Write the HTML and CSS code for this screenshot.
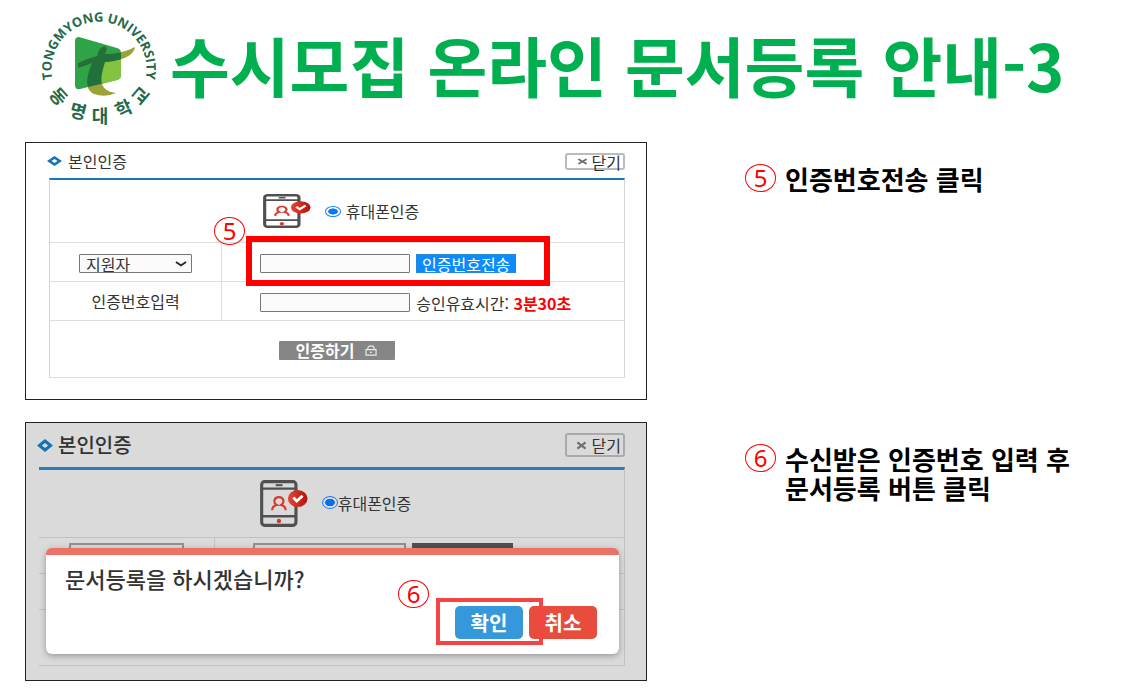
FILE: index.html
```html
<!DOCTYPE html>
<html lang="ko">
<head>
<meta charset="utf-8">
<meta name="viewport" content="width=device-width, initial-scale=1">
<title>수시모집 온라인 문서등록 안내-3</title>
<link rel="stylesheet" href="styles.css">
</head>
<body>
<svg width="0" height="0" class="defs" aria-hidden="true">
  <defs>
    <linearGradient id="badge" x1="0" x2="1"><stop offset="0" stop-color="#e5462f"/><stop offset="1" stop-color="#b5120f"/></linearGradient>
    <symbol id="phone" viewBox="0 0 49 47" preserveAspectRatio="none">
      <rect x="1.7" y="1.7" width="35" height="43.6" rx="3" fill="none" stroke="#505050" stroke-width="3.2"/>
      <path d="M2 8.6H37M2 36.2H37" stroke="#505050" stroke-width="2.4"/>
      <path d="M16 5.2H23" stroke="#505050" stroke-width="2"/>
      <circle cx="19.3" cy="41" r="2.2" fill="#d8392c"/>
      <path d="M12.4 30.2C12.6 26.8 14.4 25.6 17 25C13.400 23 14 17.200 19.300 17.200S25.200 23 21.600 25C24.200 25.600 26 26.800 26.200 30.200" fill="none" stroke="#d8392c" stroke-width="2.200"/>
      <ellipse cx="38.500" cy="18.500" rx="10" ry="8.600" fill="url(#badge)"/>
      <path d="M34 17.500L37.500 21L43.500 15.800" fill="none" stroke="#fff" stroke-width="2.800"/>
    </symbol>
    <symbol id="diamond" viewBox="0 0 16 14" preserveAspectRatio="none">
      <path fill-rule="evenodd" d="M8 0L16 7L8 14L0 7ZM8 4.200L4.800 7L8 9.800L11.200 7Z" fill="#1273b5"/>
    </symbol>
    <symbol id="cross" viewBox="0 0 12 10" preserveAspectRatio="none">
      <path d="M1.500 1.500L10.500 8.500M10.500 1.500L1.500 8.500" stroke="#707070" stroke-width="2.400"/>
    </symbol>
  </defs>
</svg>

<header class="masthead">
  <svg class="logo" viewBox="38 3 122 130" role="img" aria-label="동명대학교 Tongmyong University">
    <defs>
      <path id="ring" d="M52.500 79A47.500 47.500 0 1 1 145.500 79"/>
      <clipPath id="plate"><path d="M79 37Q75 37 75 41V85Q75 90 80 89L117 80Q121 79 121 75V53Q121 49 117 48Z"/></clipPath>
    </defs>
    <text class="logo-ring"><textPath href="#ring">TONGMYONG UNIVERSITY</textPath></text>
    <g class="logo-school">
      <text transform="translate(58 97) rotate(48)" y="6">동</text>
      <text transform="translate(78 112) rotate(14)" y="6">명</text>
      <text transform="translate(100 117)" y="6">대</text>
      <text transform="translate(124 109) rotate(-25)" y="6">학</text>
      <text transform="translate(141 96) rotate(-50)" y="6">교</text>
    </g>
    <path d="M79 37Q75 37 75 41V85Q75 90 80 89L117 80Q121 79 121 75V53Q121 49 117 48Z" fill="#2fa348"/>
    <path d="M102 60L121 54V75Q121 79 117 80L94 86Q99 76 102 60Z" fill="#84c341"/>
    <path d="M78 63Q88 58 97 56Q99 46 105 46Q109 48 105 54Q122 54 135 47Q134 56 118 60Q110 62 105 62C101 76 96 90 116 93Q105 98 94 94C84 89 86 76 92 63Q86 66 78 68Z" fill="#9ba338"/>
    <path clip-path="url(#plate)" d="M78 63Q88 58 97 56Q99 46 105 46Q109 48 105 54Q122 54 135 47Q134 56 118 60Q110 62 105 62C101 76 96 90 116 93Q105 98 94 94C84 89 86 76 92 63Q86 66 78 68Z" fill="#22713b"/>
  </svg>
  <h1 class="title">수시모집 온라인 문서등록 안내-3</h1>
</header>

<main class="steps">
  <section class="panel panel-form" aria-label="본인인증">
    <div class="panel-head">
      <h2 class="panel-title"><svg class="diamond"><use href="#diamond"/></svg>본인인증</h2>
      <button type="button" class="close"><svg class="cross"><use href="#cross"/></svg>닫기</button>
    </div>
    <table class="form">
      <colgroup><col class="col-label"><col></colgroup>
      <tr class="row-method"><td colspan="2">
        <div class="method">
          <svg class="phone"><use href="#phone"/></svg>
          <label class="choice"><input type="radio" name="method1" checked>휴대폰인증</label>
        </div>
      </td></tr>
      <tr class="row-field">
        <th class="label-cell">
          <span class="picker">
            <select aria-label="인증 대상"><option>지원자</option></select>
            <svg viewBox="0 0 12 6"><path d="M1 1L6 4.500L11 1" fill="none" stroke="#222" stroke-width="1.800"/></svg>
          </span>
        </th>
        <td><div class="field marked">
          <input type="text" aria-label="휴대폰 번호">
          <button type="button" class="send">인증번호전송</button>
          <span class="num num-over">5</span>
        </div></td>
      </tr>
      <tr class="row-field">
        <th class="label-cell"><label for="code">인증번호입력</label></th>
        <td><div class="field"><input type="text" id="code"><span>승인유효시간: <strong class="time">3분30초</strong></span></div></td>
      </tr>
      <tr class="row-submit"><td colspan="2">
        <button type="button" class="submit">인증하기
          <svg viewBox="0 0 14 12"><path d="M3.500 5V4Q3.500 1 7 1T10.500 4V5M1.500 5H12.500V11H1.500ZM6 8H8" fill="none" stroke="#e8e8e8" stroke-width="1.300"/></svg>
        </button>
      </td></tr>
    </table>
  </section>

  <div class="guide"><span class="num">5</span><p>인증번호전송 클릭</p></div>

  <section class="panel panel-confirm" aria-label="문서등록 확인">
    <div class="panel-head">
      <h2 class="panel-title"><svg class="diamond"><use href="#diamond"/></svg>본인인증</h2>
      <button type="button" class="close"><svg class="cross"><use href="#cross"/></svg>닫기</button>
    </div>
    <table class="form">
      <colgroup><col class="col-label"><col></colgroup>
      <tr class="row-method"><td colspan="2">
        <div class="method">
          <svg class="phone"><use href="#phone"/></svg>
          <label class="choice"><input type="radio" name="method2" checked>휴대폰인증</label>
        </div>
      </td></tr>
      <tr class="row-field"><th class="label-cell"><span class="ghost ghost-select"></span></th>
        <td><div class="field"><span class="ghost ghost-input"></span><span class="ghost ghost-send"></span></div></td></tr>
      <tr class="row-field"><th class="label-cell"></th><td></td></tr>
      <tr class="row-submit"><td colspan="2"></td></tr>
    </table>
    <div class="dialog" role="dialog" aria-labelledby="ask">
      <p id="ask">문서등록을 하시겠습니까?</p>
      <div class="actions">
        <span class="ok-wrap"><button type="button" class="ok">확인</button><span class="num num-over">6</span></span>
        <button type="button" class="cancel">취소</button>
      </div>
    </div>
  </section>

  <div class="guide"><span class="num">6</span><p>수신받은 인증번호 입력 후<br>문서등록 버튼 클릭</p></div>
</main>
</body>
</html>
```
FILE: styles.css
```css
* { box-sizing: border-box; }

body {
  margin: 0;
  background: #fff;
  color: #333;
  font: 16px/18px "Noto Sans CJK KR", sans-serif;
}

h1, h2, p { margin: 0; }
button, input, select { font: inherit; color: inherit; margin: 0; }
svg { display: block; flex: none; }
.defs { position: absolute; }

/* Heading */
.masthead {
  display: flex;
  align-items: center;
  gap: 10px;
  padding: 3px 25px 9px 38px;
}
.logo { width: 122px; height: 130px; }
.logo-ring { font: 700 13px "Open Sans", sans-serif; fill: #22694a; }
.logo-school { font: 700 18px "Noto Sans CJK KR", sans-serif; fill: #22694a; text-anchor: middle; }
.title { padding-bottom: 8px; font-size: 65px; line-height: 80px; font-weight: 700; color: #00b050; white-space: nowrap; }

/* Screens on the left, instructions on the right */
.steps {
  display: grid;
  grid-template-columns: 622fr 363fr;
  column-gap: 98px;
  row-gap: 22px;
  padding: 0 25px 9px;
}
.guide {
  display: flex;
  align-items: flex-start;
  gap: 9px;
  padding-top: 22px;
  color: #000;
  font-size: 26px;
  line-height: 29px;
  font-weight: 700;
  white-space: nowrap;
}
.num {
  display: block;
  flex: none;
  width: 31px;
  height: 28px;
  border: 1px solid #f00;
  border-radius: 50%;
  color: #f00;
  font: 400 24px/26px "Noto Sans", sans-serif;
  text-align: center;
}
.num-over { position: absolute; }

/* Shared panel parts */
.panel { position: relative; border: 1px solid #222; }
.panel-head { display: flex; align-items: center; justify-content: space-between; }
.panel-title { display: flex; align-items: center; font-size: 16px; font-weight: 400; }
.close {
  display: flex;
  align-items: center;
  justify-content: flex-end;
  width: 60px;
  padding: 0 2px 0 0;
  border: 2px solid #bbb;
  border-radius: 3px;
  background: #fff;
}
.form { width: 100%; table-layout: fixed; border-collapse: separate; border-spacing: 0; }
.form td, .form th { padding: 0; font-weight: 400; border-bottom: 1px solid #ddd; }
.col-label { width: 30%; }
.label-cell { border-right: 1px solid #ddd; text-align: center; }
.method, .choice { display: flex; align-items: center; justify-content: center; }
.method { padding-left: 8px; gap: 14px; }
.choice input {
  appearance: none;
  width: 16px;
  border: 1px solid #1a7dff;
  border-radius: 50%;
  background: radial-gradient(closest-side, #0a76ff 64%, #fff 72%);
}
.field { display: flex; align-items: center; width: fit-content; white-space: nowrap; }

/* First screen */
.panel-form { padding: 0 21px 21px 23px; }
.panel-form .panel-head { height: 35px; margin-left: -2px; padding-top: 2px; }
.panel-form .panel-title { gap: 6px; padding-bottom: 2px; }
.panel-form .diamond { width: 15px; height: 10px; }
.panel-form .close { height: 17px; line-height: 12px; gap: 4px; }
.panel-form .cross { width: 11px; height: 7px; }
.panel-form .form { border: 1px solid #d5d5d5; border-top: 2px solid #1a78b8; border-bottom: 0; }
.panel-form .row-method { height: 63px; }
.panel-form .row-field { height: 39px; }
.panel-form .row-submit { height: 57px; }
.panel-form .phone { width: 48px; height: 34px; }
.panel-form .choice { gap: 5px; }
.panel-form .choice input { height: 11px; }
.panel-form .field { position: relative; margin-left: 38px; margin-top: 3px; gap: 6px; }
.field input {
  width: 150px;
  height: 19px;
  padding: 0 4px;
  border: 1px solid #777;
  border-radius: 1px;
  background: #fafafa;
}
.picker { position: relative; display: block; width: 113px; margin: 3px auto 0; }
.picker select {
  appearance: none;
  display: block;
  width: 100%;
  height: 19px;
  padding: 0 6px;
  border: 1px solid #777;
  border-radius: 1px;
  background: #fafafa;
  line-height: 16px;
}
.picker svg { position: absolute; right: 5px; top: 7px; width: 12px; height: 6px; pointer-events: none; }
.send { height: 19px; width: 100px; padding: 0; border: 1px solid #2a86d6; background: #0a8cff; color: #fff; line-height: 16px; white-space: nowrap; }
.marked::after {
  content: "";
  position: absolute;
  inset: -18px -34px -13px -14px;
  border: 6px solid #f00;
  pointer-events: none;
}
.marked .num-over { left: -46px; top: -37px; }
.time { color: #f00; }
.submit {
  display: flex;
  align-items: center;
  justify-content: center;
  gap: 10px;
  width: 116px;
  height: 19px;
  margin: 2px auto 0;
  padding: 0;
  border: 0;
  border-radius: 1px;
  background: #868686;
  color: #fff;
  font-weight: 700;
  line-height: 18px;
}
.submit svg { width: 14px; height: 11px; }

/* Second screen, dimmed behind the dialog */
.panel-confirm { padding: 0 21px 14px 13px; background: #dadada; }
.panel-confirm .panel-head { height: 44px; margin-left: -2px; }
.panel-confirm .panel-title { gap: 5px; font-size: 20px; font-weight: 500; }
.panel-confirm .diamond { width: 16px; height: 13px; }
.panel-confirm .close { height: 24px; line-height: 16px; gap: 5px; border-color: #aaa; background: #dadada; }
.panel-confirm .cross { width: 11px; height: 9px; }
.panel-confirm .form { border-top: 3px solid #2a7db5; border-right: 1px solid #c2c2c2; }
.panel-confirm .form td, .panel-confirm .form th { border-color: #c2c2c2; }
.panel-confirm .row-method { height: 68px; }
.panel-confirm .row-field { height: 36px; }
.panel-confirm .row-submit { height: 56px; }
.panel-confirm .phone { width: 48px; height: 47px; }
.panel-confirm .choice { line-height: 16px; padding-bottom: 2px; }
.panel-confirm .choice input { height: 13px; background: radial-gradient(closest-side, #0a6ee6 64%, #dadada 72%); }
.panel-confirm .field { margin-left: 38px; gap: 6px; }
.ghost { display: block; height: 26px; border: 2px solid #909090; }
.ghost-select { width: 115px; margin: 0 auto; }
.ghost-input { width: 153px; }
.ghost-send { width: 101px; border: 0; background: #505050; }

.dialog {
  position: absolute;
  left: 20px;
  right: 27px;
  top: 125px;
  padding: 13px 22px 15px 19px;
  border-top: 7px solid #ed7266;
  border-radius: 6px;
  background: #fff;
  box-shadow: 0 2px 6px rgba(0, 0, 0, 0.3);
  font-size: 22px;
  line-height: 20px;
  font-weight: 500;
}
.actions { display: flex; justify-content: flex-end; gap: 6px; margin-top: 18px; font-size: 20px; }
.actions button { width: 68px; height: 33px; padding: 0; border: 0; border-radius: 5px; color: #fff; font-weight: 700; }
.ok { background: #3498db; }
.cancel { background: #e74c3c; }
.ok-wrap { position: relative; }
.ok-wrap::after {
  content: "";
  position: absolute;
  inset: -8px -20px -6px -19px;
  border: 4px solid #f44545;
  pointer-events: none;
}
.ok-wrap .num-over { left: -57px; top: -26px; }
```
